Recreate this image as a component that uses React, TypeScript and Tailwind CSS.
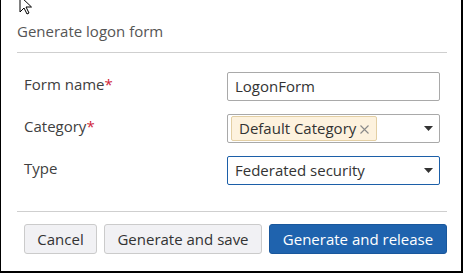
import React from "react";

function Caret() {
  return (
    <svg width="9" height="5" viewBox="0 0 9 5" className="shrink-0">
      <path d="M0 0h9L4.5 5z" fill="#333" />
    </svg>
  );
}

function Label({ text, required }: { text: string; required?: boolean }) {
  return (
    <div className="pt-[2px] text-[15px] leading-[20px] text-[#404040]">
      {text}
      {required && <span className="text-[#d0243a]">*</span>}
    </div>
  );
}

export default function App() {
  return (
    <div className="relative w-[463px] h-[273px] bg-white border-l border-r-2 border-b-2 border-black font-['Open_Sans',sans-serif] overflow-hidden">
      {/* mouse pointer */}
      <svg
        width="13"
        height="20"
        viewBox="0 0 13 20"
        className="absolute left-[18px] top-[-5px]"
      >
        <path
          d="M1 1v16l4-4 3 6 2-1-3-6h5.5z"
          fill="#fff"
          stroke="#000"
          strokeWidth="1"
          strokeLinejoin="miter"
        />
      </svg>

      <div className="pl-[16px] pr-[14px]">
        {/* header */}
        <div className="pt-[21px] pb-[11px] border-b border-[#cfcfcf] text-[15px] leading-[20px] text-[#555]">
          Generate logon form
        </div>

        {/* form */}
        <div className="pl-[7px] pt-[19px] pb-[26px] border-b border-[#cfcfcf] grid grid-cols-[203px_213px] gap-y-[13px]">
          <Label text="Form name" required />
          <div className="h-[29px] border border-[#a9a9a9] rounded-[2px] flex items-center px-[7px] text-[15px] text-[#333]">
            LogonForm
          </div>

          <Label text="Category" required />
          <div className="h-[29px] border border-[#a9a9a9] rounded-[2px] flex items-center pl-[3px] pr-[6px]">
            <div className="h-[25px] flex items-center gap-[4px] pl-[7px] pr-[7px] bg-[#fdf2de] border border-[#e3cfa4] rounded-[2px] text-[15px] text-[#333]">
              Default Category
              <svg width="9" height="9" viewBox="0 0 9 9" className="mt-[1px]">
                <path d="M0.5 0.5l8 8M8.5 0.5l-8 8" stroke="#8a8a8a" strokeWidth="1.1" />
              </svg>
            </div>
            <div className="flex-1" />
            <Caret />
          </div>

          <Label text="Type" />
          <div className="h-[29px] border border-[#1c5fa8] rounded-[2px] flex items-center pl-[7px] pr-[6px] text-[15px] text-[#333]">
            <span className="flex-1">Federated security</span>
            <Caret />
          </div>
        </div>

        {/* footer */}
        <div className="pl-[7px] pt-[12px] flex gap-[7px] text-[15px]">
          <button className="w-[73px] h-[30px] bg-[#f1f1f4] border border-[#cbcbcb] rounded-[3px] text-[#333]">
            Cancel
          </button>
          <button className="w-[158px] h-[30px] bg-[#f1f1f4] border border-[#cbcbcb] rounded-[3px] text-[#333]">
            Generate and save
          </button>
          <button className="w-[178px] h-[30px] bg-[#1f63ae] border border-[#19579c] rounded-[3px] text-white">
            Generate and release
          </button>
        </div>
      </div>
    </div>
  );
}
